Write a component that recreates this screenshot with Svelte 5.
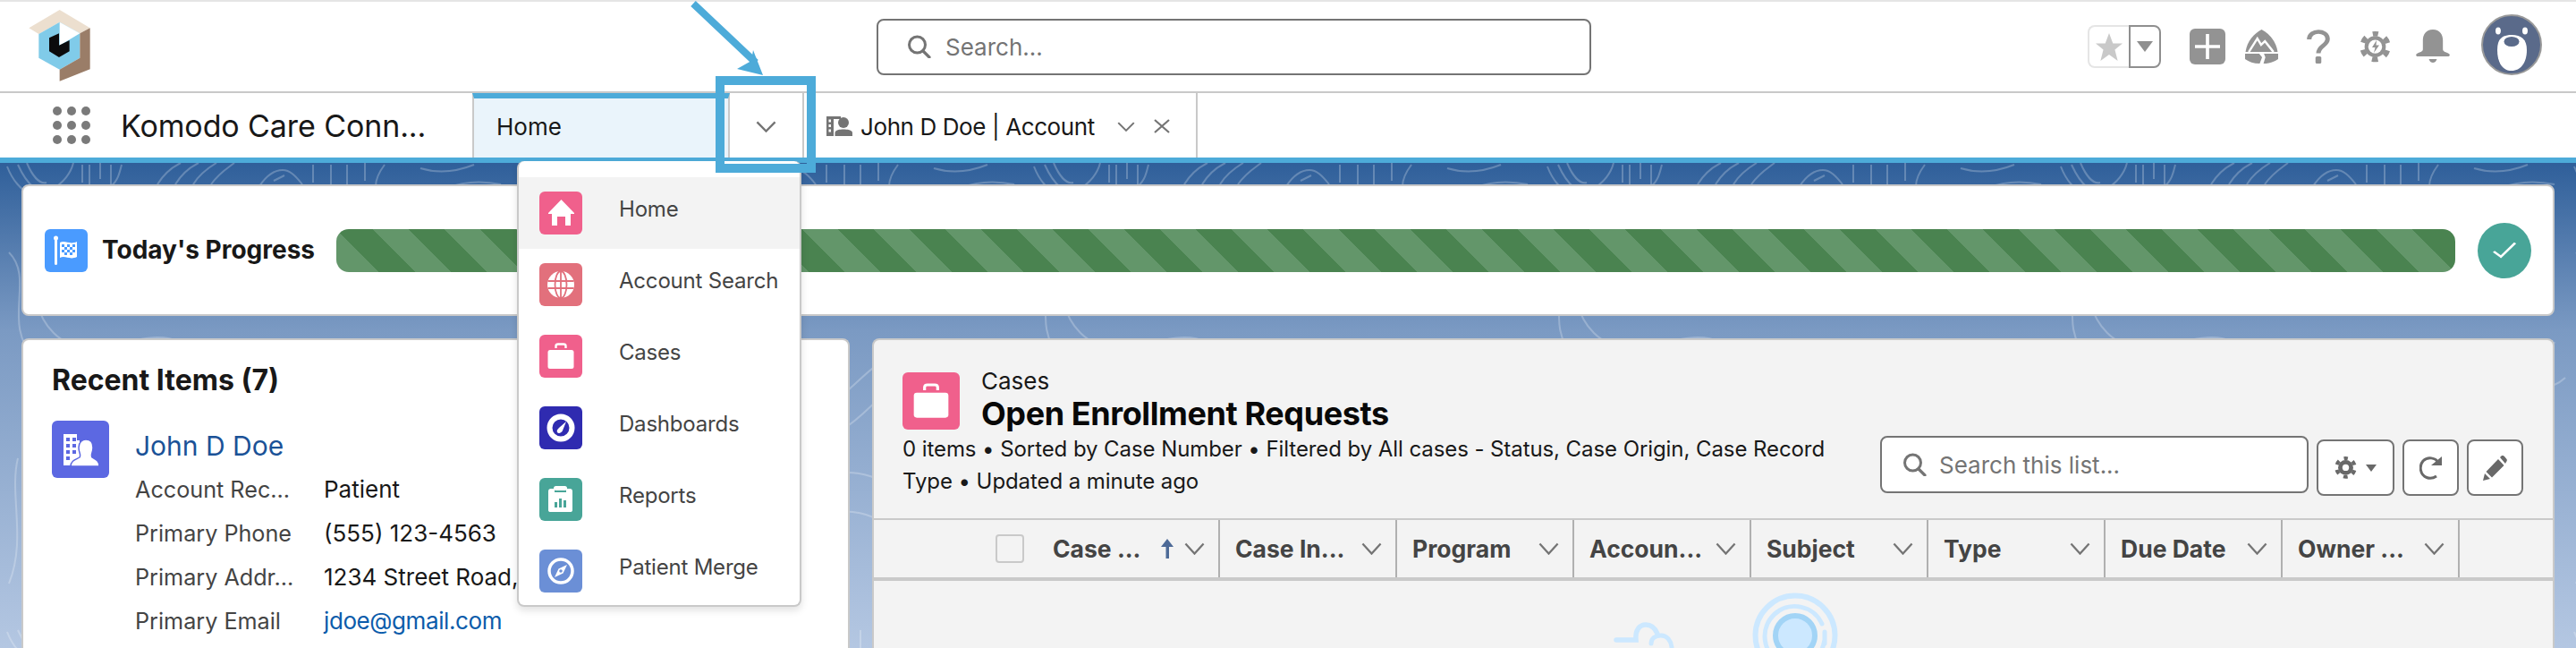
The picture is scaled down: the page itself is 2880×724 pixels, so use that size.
<script>
  const menu = [
    { name: 'Home', icon: 'home', color: '#f0608c', active: true },
    { name: 'Account Search', icon: 'globe', color: '#e2707c' },
    { name: 'Cases', icon: 'case', color: '#f0608c' },
    { name: 'Dashboards', icon: 'gauge', color: '#2f2bb0' },
    { name: 'Reports', icon: 'report', color: '#48a598' },
    { name: 'Patient Merge', icon: 'compass', color: '#6b8fd6' }
  ];

  const fields = [
    { label: 'Account Rec...', value: 'Patient' },
    { label: 'Primary Phone', value: '(555) 123-4563' },
    { label: 'Primary Addr...', value: '1234 Street Road,' },
    { label: 'Primary Email', value: 'jdoe@gmail.com', link: true }
  ];

  const columns = ['Case ...', 'Case In...', 'Program', 'Accoun...', 'Subject', 'Type', 'Due Date', 'Owner ...'];
</script>

{#snippet chevron(w, h)}
  <svg class="chev" width={w} height={h} viewBox="0 0 24 14" preserveAspectRatio="none">
    <path d="M1.5 1.5 L12 12.5 L22.5 1.5" fill="none" stroke="#747474" stroke-width="2.4" />
  </svg>
{/snippet}

{#snippet searchIcon()}
  <svg width="27" height="26" viewBox="0 0 27 26">
    <circle cx="11.5" cy="11" r="9" fill="none" stroke="#747474" stroke-width="3" />
    <path d="M18 18 L25 25" stroke="#747474" stroke-width="3.2" stroke-linecap="round" />
  </svg>
{/snippet}

{#snippet gear(size, fg, hole)}
  <svg width={size} height={size * 1.15} viewBox="0 0 34 39">
    <circle cx="17" cy="19.5" r="11.5" fill={fg} />
    <circle cx="17" cy="19.5" r="14" fill="none" stroke={fg} stroke-width="5.5" stroke-dasharray="6.5 8.16" stroke-dashoffset="3.25" transform="rotate(-90 17 19.5)" />
    <circle cx="17" cy="19.5" r={hole} fill="#fff" />
  </svg>
{/snippet}

<div class="page">
  <header class="top">
    <svg class="logo" width="69" height="80" viewBox="97 36 205 240">
      <polygon points="200,36 302,97 268,115 200,77 130,117 97,97" fill="#ecdfcf" />
      <polygon points="200,77 130,117 130,197 200,236 268,197 268,115" fill="#80cbe9" />
      <polygon points="200,77 268,115 200,155" fill="#fff" />
      <polygon points="165,130 198,115 198,155 233,138 233,175 198,195 165,175" fill="#0b0b0d" />
      <polygon points="302,97 302,235 200,275 200,236 268,197 268,115" fill="#9a7d68" />
    </svg>

    <div class="global-search">
      {@render searchIcon()}
      <span>Search...</span>
    </div>

    <div class="actions">
      <div class="fav">
        <span class="fav-star">
          <svg width="30" height="31" viewBox="0 0 28 31" preserveAspectRatio="none"><path d="M14 0 L18 11.5 L28 11.5 L20 18.5 L23 31 L14 24 L5 31 L8 18.5 L0 11.5 L10 11.5Z" fill="#c9c9c9" /></svg>
        </span>
        <span class="fav-more">
          <svg width="18" height="12" viewBox="0 0 16 12" preserveAspectRatio="none"><path d="M0 0 H16 L8 12Z" fill="#8f8f8f" /></svg>
        </span>
      </div>
      <span class="plus">
        <svg width="28" height="28" viewBox="0 0 26 28" preserveAspectRatio="none"><path d="M13 0 V28 M0 14 H26" stroke="#fff" stroke-width="3.4" /></svg>
      </span>
      <svg class="trail" width="37" height="38" viewBox="0 0 35 38" preserveAspectRatio="none">
        <path d="M17.5 0 C25 4 33 13 34.5 25 H0.5 C2 13 10 4 17.5 0Z" fill="#939393" />
        <path d="M4 25 L13 10 L17 17 L21 13 L30 25" fill="none" stroke="#fff" stroke-width="2.4" />
        <path d="M0 27 H15 L18 31 L15.5 38 C9 38 4 36 0 33Z M20 27 H35 V33 C31 36 25 38 19.5 38 L21.5 31Z" fill="#939393" />
      </svg>
      <svg class="help" width="26" height="38" viewBox="0 0 24 38" preserveAspectRatio="none">
        <path d="M2.5 11 C2.5 -0.5 21.5 0 21.5 10.5 C21.5 18 12 18 12 26.5" fill="none" stroke="#939393" stroke-width="4.6" />
        <rect x="9" y="30" width="6" height="8" rx="1.5" fill="#939393" />
      </svg>
      <span class="gear-wrap">
        {@render gear(35, '#939393', 7.5)}
        <svg class="bolt" width="10" height="14" viewBox="0 0 10 14"><path d="M6 0 L1 8 H4.5 L3 14 L9 5.5 H5.5Z" fill="#939393" /></svg>
      </span>
      <svg class="bell" width="38" height="38" viewBox="0 0 34 38" preserveAspectRatio="none">
        <path d="M17 0 C24 0 27 6 27 12 V22 C27 25 30 25 33 27 C34.5 28 34 30 32 30 H2 C0 30 -0.5 28 1 27 C4 25 7 25 7 22 V12 C7 6 10 0 17 0Z" fill="#939393" />
        <path d="M13 33 H21 C20 36 18.5 37 17 37 C15.5 37 14 36 13 33Z" fill="#939393" />
      </svg>
      <svg class="bear" width="68" height="68" viewBox="0 0 68 68">
        <circle cx="34" cy="34" r="33" fill="#5a6a8a" stroke="#999" stroke-width="2" />
        <ellipse cx="19" cy="18.5" rx="3" ry="4" fill="#fff" />
        <ellipse cx="49" cy="18.5" rx="3" ry="4" fill="#fff" />
        <path d="M34 23 C45 23 51 28 51 40 C51 54 44 63 34 63 C24 63 18 54 18 40 C18 28 23 23 34 23Z" fill="#fff" />
        <ellipse cx="34" cy="30.5" rx="8.5" ry="5.5" fill="#5a6a8a" />
      </svg>
    </div>
  </header>

  <nav class="tabs">
    <span class="launcher">
      {#each Array(9) as _}<i></i>{/each}
    </span>
    <span class="app-name">Komodo Care Conn...</span>
    <div class="tab-home"><span>Home</span></div>
    <div class="tab-more">{@render chevron(23, 13)}</div>
    <div class="tab-record">
      <svg width="30" height="22" viewBox="0 0 30 22">
        <path d="M0 0 H16 V3 H8 V22 H0Z M2.500 3.500 V6.500 H5 V3.500Z M2.500 9 V12 H5 V9Z M2.500 14.500 V17.500 H5 V14.500Z" fill="#747474" fill-rule="evenodd" />
        <circle cx="19" cy="7" r="6" fill="#747474" />
        <path d="M9.500 22 V18.500 C9.500 15 15 14.500 19 14.500 C23 14.500 29 15 29 18.500 V22Z" fill="#747474" />
      </svg>
      <span class="record-name">John D Doe | Account</span>
      {@render chevron(20, 11)}
      <svg class="close" width="18" height="16" viewBox="0 0 18 16"><path d="M1 1 L17 15 M17 1 L1 15" stroke="#747474" stroke-width="2.2" /></svg>
    </div>
  </nav>

  <main class="content">
    <svg class="contours" width="2880" height="542">
      <defs>
        <pattern id="topo" width="574" height="520" patternUnits="userSpaceOnUse">
          <g fill="none" stroke="#fff" stroke-opacity="0.24" stroke-width="2">
            <path d="M20 2 C30 24 44 38 58 30 C74 20 80 8 82 0" />
            <path d="M8 4 C14 20 24 30 32 34 M30 0 C36 14 44 24 52 22" />
            <path d="M92 2 V22 M100 2 V24 M112 0 V18 M124 2 V24 M136 2 C134 10 132 20 124 26" />
            <path d="M176 24 C182 14 190 6 202 0 M196 24 C202 14 210 6 222 0 M216 24 C222 14 232 6 242 0 M236 24 C244 12 254 6 262 0" />
            <path d="M290 26 C298 14 306 8 316 8 C324 8 330 14 338 24 M306 20 L318 14" />
            <path d="M350 2 V22 M370 2 V24 M388 2 V26 M408 0 V20 M430 2 C424 10 420 18 420 26" />
            <path d="M470 6 C490 12 510 10 530 2 M500 28 C520 20 540 20 560 24" />
            <path d="M30 60 C60 110 20 150 60 190 C100 230 160 180 200 200 C250 226 260 280 320 280 C370 280 390 220 440 210 C490 200 540 240 560 200" />
            <path d="M10 100 C40 130 0 180 40 220 C90 260 150 210 200 230 C240 246 260 310 320 310 C390 310 400 250 450 240 C500 230 540 270 572 240" />
            <path d="M100 330 C130 300 170 300 190 330 C210 360 180 400 150 400 C110 400 80 360 100 330Z" />
            <path d="M120 340 C136 322 160 324 172 342 C182 358 168 384 148 384 C124 384 108 356 120 340Z" />
            <path d="M350 350 C380 340 420 350 440 380 C460 410 500 420 540 400" />
            <path d="M330 400 C370 380 410 390 430 420 C450 450 500 460 560 440" />
            <path d="M20 330 C10 370 30 420 10 470 M50 420 C80 440 100 480 90 518" />
            <path d="M240 90 C290 60 340 90 360 130 C380 170 440 170 470 130 C490 100 530 90 560 100" />
            <path d="M210 470 C240 440 280 440 300 470 C310 486 320 500 340 518" />
            <circle cx="270" cy="400" r="8" />
          </g>
        </pattern>
      </defs>
      <rect width="2880" height="542" fill="url(#topo)" />
    </svg>

    <section class="progress-card">
      <span class="flag-icon">
        <svg width="48" height="48" viewBox="0 0 48 48">
          <rect x="11" y="10" width="3" height="30" rx="1.500" fill="#fff" />
          <circle cx="12.500" cy="10" r="2.500" fill="#fff" />
          <path d="M17 15 C23 12 28 18 36 14 V31 C28 35 23 29 17 32Z" fill="#fff" />
          <path d="M19 17 H22 V20 H19Z M25 17 H28 V20 H25Z M31 17 H34 V20 H31Z M22 20 H25 V23 H22Z M28 20 H31 V23 H28Z M19 23 H22 V26 H19Z M25 23 H28 V26 H25Z M31 23 H34 V26 H31Z M22 26 H25 V29 H22Z M28 26 H31 V29 H28Z" fill="#4a9bff" />
        </svg>
      </span>
      <h2>Today's Progress</h2>
      <div class="bar"></div>
      <span class="done">
        <svg width="26" height="19" viewBox="0 0 26 26" preserveAspectRatio="none"><path d="M1 15 L9 23 L25 2" fill="none" stroke="#fff" stroke-width="3" /></svg>
      </span>
    </section>

    <div class="columns">
      <section class="recent">
        <h2>Recent Items (7)</h2>
        <div class="record">
          <span class="record-icon">
            <svg width="64" height="64" viewBox="0 0 64 64">
              <path d="M13 15 H28 V22 H31 V50 H13Z" fill="#fff" />
              <path d="M16 19 H20 V23 H16Z M23 19 H27 V23 H23Z M16 26 H20 V30 H16Z M23 26 H27 V30 H23Z M16 33 H20 V37 H16Z M16 40 H20 V44 H16Z M23 33 H27 V37 H23Z" fill="#5c68e2" />
              <path d="M21 51 C21 44 28 43 31 41 C33 38 30 36 30 30 C30 24 34 21 38 21 C43 21 46 24 46 30 C46 36 43 38 45 41 C48 43 53 44 53 51Z" fill="#fff" stroke="#5c68e2" stroke-width="1.500" />
            </svg>
          </span>
          <div class="record-body">
            <a class="record-title" href="#john">John D Doe</a>
            <dl>
              {#each fields as f}
                <dt>{f.label}</dt>
                <dd class:link={f.link}>{f.value}</dd>
              {/each}
            </dl>
          </div>
        </div>
      </section>

      <section class="list">
        <div class="list-head">
          <div class="list-info">
            <div class="list-title">
              <span class="list-icon">
                <svg width="64" height="64" viewBox="0 0 48 48">
                  <rect x="9.500" y="17" width="29" height="21" rx="2.500" fill="#fff" />
                  <path d="M18.500 15 V12.500 C18.500 11 19.500 10.500 21 10.500 H27 C28.500 10.500 29.500 11 29.500 12.500 V15" fill="none" stroke="#fff" stroke-width="2.400" />
                </svg>
              </span>
              <div>
                <p class="object">Cases</p>
                <h1>Open Enrollment Requests</h1>
              </div>
            </div>
            <p class="meta">0 items • Sorted by Case Number • Filtered by All cases - Status, Case Origin, Case Record Type • Updated a minute ago</p>
          </div>
          <div class="tools">
            <div class="list-search">
              {@render searchIcon()}
              <span>Search this list...</span>
            </div>
            <button type="button" class="btn gear-btn" aria-label="List settings">
              {@render gear(25, '#696969', 5)}
              <svg width="12" height="8" viewBox="0 0 12 8"><path d="M0 0 H12 L6 8Z" fill="#696969" /></svg>
            </button>
            <button type="button" class="btn" aria-label="Refresh">
              <svg width="26" height="26" viewBox="0 0 26 26">
                <path d="M21 7 C18 1 9 0 4 5 C-1 11 1 21 8 23.500 C12 25 16 24 19 22" fill="none" stroke="#696969" stroke-width="3" />
                <path d="M13 10 H25 V0Z" fill="#696969" />
              </svg>
            </button>
            <button type="button" class="btn" aria-label="Edit">
              <svg width="27" height="28" viewBox="0 0 27 28">
                <path d="M0 28 L2 20 L8 26Z M3.500 18 L17 4 L23.500 11 L10 24.500Z M19 2 L21 0 C22 -0.500 23 0 24 1 L26.500 4 C27 5 27 6 26 7 L25 9Z" fill="#696969" />
              </svg>
            </button>
          </div>
        </div>

        <div class="thead">
          <div class="cell-check"><span class="check"></span></div>
          {#each columns as col, i}
            <div class="th" class:first={i === 0}>
              <span class="th-label">{col}</span>
              {#if i === 0}
                <svg class="sort" width="16" height="22" viewBox="0 0 16 22"><path d="M8 0 L15 9 H10 V22 H6.500 V9 H1Z" fill="#4d6a97" /></svg>
              {/if}
              {@render chevron(23, 14)}
            </div>
          {/each}
        </div>

        <div class="empty">
          <svg width="300" height="75" viewBox="0 0 300 75">
            <g fill="none" stroke="#cce8ff">
              <circle cx="227" cy="61" r="44.500" stroke-width="6" />
              <path d="M257 48 A33.500 33.500 0 1 0 259.500 68" stroke-width="5" stroke-linecap="round" />
              <path d="M260 57 V70" stroke-width="5" stroke-linecap="round" />
              <path d="M27 66 H49 C48 55 53 49 60 49 C66 49 70 52 73 59" stroke-width="5.500" stroke-linecap="round" />
              <path d="M66 70 C66 64 71 61 77 61 C84 61 88 67 89 74" stroke-width="5" stroke-linecap="round" />
            </g>
            <circle cx="227" cy="61" r="22" fill="#cce8ff" stroke="#a2d4f6" stroke-width="6" />
          </svg>
        </div>
      </section>
    </div>
  </main>

  <div class="dropdown">
    {#each menu as item}
      <div class="menu-item" class:active={item.active}>
        <span class="menu-icon" style="background: {item.color}">
          <svg width="48" height="48" viewBox="0 0 48 48">
            {#if item.icon === 'home'}
              <path d="M24.500 9 L39 24 V25 H35 V38 H29 V28 H20 V38 H14 V25 H10 V24Z" fill="#fff" />
            {:else if item.icon === 'globe'}
              <circle cx="24" cy="24" r="15" fill="#fff" />
              <g fill="none" stroke={item.color} stroke-width="1.800">
                <ellipse cx="24" cy="24" rx="6.500" ry="15" />
                <path d="M24 9 V39 M9.500 20 H38.500 M9.500 28 H38.500" />
              </g>
            {:else if item.icon === 'case'}
              <rect x="9.500" y="17" width="29" height="21" rx="2.500" fill="#fff" />
              <path d="M18.500 15 V12.500 C18.500 11 19.500 10.500 21 10.500 H27 C28.500 10.500 29.500 11 29.500 12.500 V15" fill="none" stroke="#fff" stroke-width="2.400" />
            {:else if item.icon === 'gauge'}
              <circle cx="24" cy="24" r="12.500" fill="none" stroke="#fff" stroke-width="6" />
              <path d="M20 29 C19 27 20.500 25.500 22 24 L30 17 L26 27 C25 29.500 21.500 31 20 29Z" fill="#fff" />
            {:else if item.icon === 'report'}
              <path d="M13 12 H17 V16 H30 V12 H34 C36 12 37 13 37 15 V36 C37 37.500 36 38 34.500 38 H12.500 C11 38 10 37.500 10 36 V15 C10 13 11 12 13 12Z" fill="#fff" />
              <rect x="16" y="9" width="15" height="5" rx="2.500" fill="#fff" />
              <path d="M18.500 27 V33 M23.500 23 V33 M28.500 25 V33" stroke={item.color} stroke-width="3" />
            {:else}
              <circle cx="24" cy="24" r="13" fill="none" stroke="#fff" stroke-width="3.500" />
              <path d="M31 17 L26.500 26.500 L17 31 L21.500 21.500Z" fill="#fff" />
              <circle cx="24" cy="24" r="1.800" fill={item.color} />
            {/if}
          </svg>
        </span>
        <span class="menu-label">{item.name}</span>
      </div>
    {/each}
  </div>

  <div class="callout-box"></div>
  <svg class="callout-arrow" width="100" height="90" viewBox="0 0 100 90">
    <path d="M6 4 L76 70" stroke="#4dabd9" stroke-width="8" />
    <path d="M84 84 L73 56 L71 68 L55 77Z" fill="#4dabd9" />
  </svg>
</div>

<style>
  :global(body) {
    margin: 0;
    background: #fff;
  }

  .page {
    position: relative;
    width: 2880px;
    height: 724px;
    overflow: hidden;
    display: flex;
    flex-direction: column;
    font-family: Inter, "Liberation Sans", sans-serif;
    color: #181818;
  }

  h1, h2, p, dl, dd {
    margin: 0;
  }

  .top {
    box-sizing: border-box;
    height: 104px;
    display: flex;
    align-items: center;
    padding-left: 32px;
    border-top: 2px solid #e5e5e5;
    border-bottom: 2px solid #c9c9c9;
  }

  .logo {
    margin-top: -2px;
    flex: none;
  }

  .global-search {
    box-sizing: border-box;
    margin-left: 879px;
    width: 799px;
    height: 63px;
    display: flex;
    align-items: center;
    gap: 16px;
    padding-left: 32px;
    border: 2px solid #747474;
    border-radius: 8px;
    font-size: 26px;
    color: #747474;
  }

  .actions {
    margin-left: auto;
    padding-right: 38px;
    display: flex;
    align-items: center;
  }

  .fav {
    display: flex;
    height: 48px;
  }

  .fav span {
    box-sizing: border-box;
    display: flex;
    align-items: center;
    justify-content: center;
  }

  .fav-star {
    width: 46px;
    border: 2px solid #e5e5e5;
    border-right: 0;
    border-radius: 8px 0 0 8px;
  }

  .fav-more {
    width: 36px;
    border: 2px solid #8f8f8f;
    border-radius: 0 8px 8px 0;
  }

  .plus {
    margin-left: 32px;
    width: 40px;
    height: 40px;
    display: flex;
    align-items: center;
    justify-content: center;
    background: #939393;
    border-radius: 6px;
  }

  .trail {
    margin-left: 22px;
  }

  .help {
    margin-left: 32px;
  }

  .gear-wrap {
    position: relative;
    margin-left: 33px;
    display: flex;
  }

  .bolt {
    position: absolute;
    left: 12.5px;
    top: 13px;
  }

  .bell {
    margin-left: 28px;
  }

  .bear {
    margin-left: 35px;
    margin-top: -4px;
  }

  .tabs {
    box-sizing: content-box;
    height: 72px;
    display: flex;
    align-items: stretch;
    border-bottom: 6px solid #4dabd9;
  }

  .launcher {
    margin-left: 59px;
    width: 42px;
    display: grid;
    grid-template-columns: repeat(3, 10px);
    grid-auto-rows: 10px;
    gap: 6px;
    align-content: center;
  }

  .launcher i {
    background: #7a7a7a;
    border-radius: 50%;
  }

  .app-name {
    width: 393px;
    margin-left: 34px;
    font-size: 34px;
    letter-spacing: -0.1px;
    line-height: 74px;
    white-space: nowrap;
  }

  .tab-home {
    box-sizing: border-box;
    width: 288px;
    display: flex;
    align-items: center;
    padding: 0 0 3px 25px;
    background: #eaf4fb;
    border-top: 6px solid #4dabd9;
    border-left: 2px solid #c9c9c9;
    border-right: 2px solid #c9c9c9;
    font-size: 26px;
  }

  .tab-more {
    box-sizing: border-box;
    width: 83px;
    display: flex;
    align-items: center;
    justify-content: center;
    padding-top: 2px;
    border-right: 2px solid #c9c9c9;
  }

  .tab-record {
    box-sizing: border-box;
    width: 440px;
    display: flex;
    align-items: center;
    padding: 2px 0 0 25px;
    border-right: 2px solid #c9c9c9;
    font-size: 26px;
  }

  .record-name {
    margin: 0 25px 0 8px;
    letter-spacing: -0.4px;
    white-space: nowrap;
  }

  .close {
    margin-left: 21px;
  }

  .content {
    position: relative;
    flex: 1;
    min-height: 0;
    padding: 24px 24px 0;
    background: linear-gradient(180deg, #2f5f9a 0, #7b9ac3 188px, #b4c7e2 100%);
  }

  .contours {
    position: absolute;
    left: 0;
    top: 0;
  }

  .progress-card {
    position: relative;
    box-sizing: border-box;
    height: 147px;
    display: flex;
    align-items: center;
    padding: 0 24px;
    background: #fff;
    border: 2px solid #c9c9c9;
    border-radius: 8px;
  }

  .flag-icon {
    width: 48px;
    height: 48px;
    background: #4a9bff;
    border-radius: 6px;
  }

  .flag-icon svg, .record-icon svg, .list-icon svg, .menu-icon svg {
    display: block;
  }

  .progress-card h2 {
    margin: 0 0 2px 16px;
    font-size: 28px;
    font-weight: 700;
    white-space: nowrap;
  }

  .bar {
    margin-left: 24px;
    flex: 1;
    height: 48px;
    border-radius: 14px;
    background: repeating-linear-gradient(45deg, #4a8350 0, #4a8350 5.66px, #63966a 5.66px, #63966a 33.94px, #4a8350 33.94px, #4a8350 56.57px);
  }

  .done {
    margin-left: 25px;
    width: 60px;
    height: 62px;
    display: flex;
    align-items: center;
    justify-content: center;
    background: #48a598;
    border-radius: 50%;
  }

  .columns {
    position: relative;
    margin-top: 25px;
    display: grid;
    grid-template-columns: 926px 1881px;
    gap: 25px;
  }

  .recent {
    box-sizing: border-box;
    height: 400px;
    padding: 27px 32px;
    background: #fff;
    border: 2px solid #c9c9c9;
    border-bottom: 0;
    border-radius: 8px 8px 0 0;
  }

  .recent h2 {
    font-size: 32px;
    font-weight: 700;
    line-height: 36px;
  }

  .record {
    margin-top: 27px;
    display: flex;
    gap: 29px;
  }

  .record-icon {
    width: 64px;
    height: 64px;
    flex: none;
    background: #5c68e2;
    border-radius: 6px;
  }

  .record-title {
    display: block;
    margin-top: 8px;
    font-size: 30px;
    line-height: 40px;
    color: #1b5297;
    text-decoration: none;
  }

  dl {
    margin-top: 4px;
    display: grid;
    grid-template-columns: 211px 1fr;
    grid-auto-rows: 49px;
    align-items: center;
    font-size: 26px;
  }

  dt {
    font-size: 25.2px;
    color: #444;
  }

  dd.link {
    letter-spacing: -0.4px;
    color: #0b5cab;
  }

  .list {
    box-sizing: border-box;
    height: 400px;
    background: #f3f3f3;
    border: 2px solid #c9c9c9;
    border-bottom: 0;
    border-radius: 8px 8px 0 0;
  }

  .list-head {
    box-sizing: border-box;
    height: 199px;
    display: flex;
    justify-content: space-between;
    padding: 36px 33px 0 32px;
  }

  .list-info {
    width: 1060px;
  }

  .list-title {
    display: flex;
    gap: 24px;
  }

  .list-icon {
    width: 64px;
    height: 64px;
    flex: none;
    background: #f0608c;
    border-radius: 6px;
  }

  .object {
    margin-top: -2px;
    font-size: 26px;
    line-height: 24px;
  }

  h1 {
    margin-top: 4px;
    font-size: 36px;
    font-weight: 700;
    letter-spacing: -0.4px;
    line-height: 40px;
    color: #080808;
    white-space: nowrap;
  }

  .meta {
    margin-top: 2px;
    font-size: 24px;
    letter-spacing: -0.08px;
    line-height: 36px;
  }

  .tools {
    display: flex;
    align-items: flex-start;
    gap: 9px;
    padding-top: 71px;
  }

  .list-search {
    box-sizing: border-box;
    width: 479px;
    height: 64px;
    display: flex;
    align-items: center;
    gap: 14px;
    padding-left: 23px;
    margin-top: 0;
    background: #fff;
    border: 2px solid #747474;
    border-radius: 8px;
    font-size: 26px;
    color: #747474;
    white-space: nowrap;
  }

  .btn {
    box-sizing: border-box;
    width: 63px;
    height: 63px;
    margin-top: 4px;
    display: flex;
    align-items: center;
    justify-content: center;
    gap: 10px;
    padding: 0;
    background: #fff;
    border: 2px solid #747474;
    border-radius: 8px;
  }

  .gear-btn {
    width: 87px;
  }

  .thead {
    box-sizing: border-box;
    height: 70px;
    display: flex;
    border-top: 2px solid #c9c9c9;
    border-bottom: 4px solid #c9c9c9;
  }

  .cell-check {
    box-sizing: border-box;
    width: 183px;
    display: flex;
    align-items: center;
    padding-left: 136px;
  }

  .check {
    box-sizing: border-box;
    width: 32px;
    height: 32px;
    border: 2px solid #c9c9c9;
    border-radius: 4px;
  }

  .th {
    box-sizing: border-box;
    width: 198px;
    display: flex;
    align-items: center;
    padding: 0 15px 0 17px;
    border-right: 2px solid #b0b0b0;
    font-size: 26.5px;
    font-weight: 700;
    color: #444;
    white-space: nowrap;
  }

  .th.first {
    width: 204px;
  }

  .th-label {
    flex: 1;
  }

  .sort {
    margin-right: 11px;
    flex: none;
  }

  .chev {
    flex: none;
  }

  .empty {
    padding-left: 803px;
  }

  .empty svg {
    display: block;
  }

  .dropdown {
    position: absolute;
    left: 578px;
    top: 180px;
    box-sizing: border-box;
    width: 318px;
    height: 498px;
    padding-top: 18px;
    background: #fff;
    border: 2px solid #c9c9c9;
    border-top: 0;
    border-radius: 8px;
    box-shadow: 0 4px 8px rgba(0, 0, 0, 0.12);
  }

  .menu-item {
    box-sizing: border-box;
    height: 80px;
    display: flex;
    align-items: center;
    padding-left: 23px;
  }

  .menu-item.active {
    background: #f3f3f3;
  }

  .menu-icon {
    width: 48px;
    height: 48px;
    flex: none;
    border-radius: 6px;
  }

  .menu-label {
    margin-left: 41px;
    padding-bottom: 10px;
    font-size: 24px;
    letter-spacing: -0.2px;
    color: #444;
    white-space: nowrap;
  }

  .callout-box {
    position: absolute;
    left: 800px;
    top: 85px;
    box-sizing: border-box;
    width: 112px;
    height: 108px;
    border: 10px solid #4dabd9;
  }

  .callout-arrow {
    position: absolute;
    left: 769px;
    top: 0;
  }
</style>
